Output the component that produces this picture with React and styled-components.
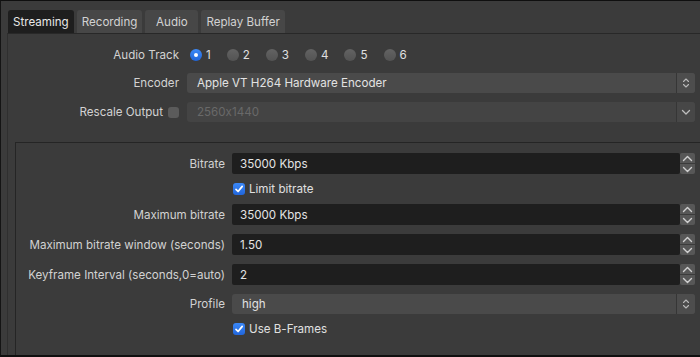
import React from 'react';
import styled, { createGlobalStyle } from 'styled-components';

const GlobalStyle = createGlobalStyle`
  html, body {
    margin: 0;
    padding: 0;
    background: #3b3b3b;
  }
  body {
    font-family: Inter, "Liberation Sans", sans-serif;
    font-feature-settings: "calt" 0;
  }
  * {
    box-sizing: border-box;
  }
`;

const Window = styled.div`
  width: 700px;
  height: 357px;
  overflow: hidden;
  background: #3b3b3b;
  border-top: 1px solid #0f0f0f;
  border-left: 1px solid #141414;
  border-bottom: 2px solid #0f0f0f;
  padding: 9px 0 0 6px;
  display: flex;
  flex-direction: column;
  font-size: 11.6px;
  color: #d4d4d4;
`;

const TabBar = styled.div`
  display: flex;
  gap: 3px;
  height: 23px;
  padding-left: 1px;
`;

const Tab = styled.div`
  height: 23px;
  min-width: 53px;
  padding: 0 5px;
  display: flex;
  align-items: center;
  justify-content: center;
  border-radius: 3px 3px 0 0;
  background: ${(p) => (p.$active ? '#1e1e1e' : '#474747')};
  color: ${(p) => (p.$active ? '#e8e8e8' : '#d2d2d2')};
  white-space: nowrap;
`;

const Pane = styled.div`
  flex: 1;
  display: flex;
  flex-direction: column;
  border-top: 1px solid #282828;
  border-left: 1px solid #2f2f2f;
`;

const TopForm = styled.div`
  display: grid;
  grid-template-columns: 171px 1fr;
  grid-template-rows: 18px 20px 20px;
  column-gap: 8px;
  row-gap: 9px;
  padding: 12px 5px 0 0;
`;

const GroupBox = styled.div`
  flex: 1;
  margin: 20px -10px 0 7px;
  border-top: 1px solid #252525;
  border-left: 1px solid #252525;
  padding: 10px 15px 0 0;
  display: grid;
  grid-template-columns: 209px 1fr;
  align-content: start;
  column-gap: 7px;
  row-gap: 9px;
`;

const Label = styled.div`
  justify-self: end;
  align-self: center;
  white-space: nowrap;
  color: #d2d2d2;
`;

const LabelWithBox = styled.div`
  justify-self: end;
  align-self: center;
  display: flex;
  align-items: center;
  gap: 5px;
  white-space: nowrap;
  color: #d2d2d2;
`;

const RadioGroup = styled.div`
  display: flex;
  align-items: center;
  gap: 16px;
  padding-left: 3px;
`;

const RadioItem = styled.div`
  display: flex;
  align-items: center;
  gap: 4px;
  color: #e0e0e0;
`;

const Radio = styled.span`
  width: 12px;
  height: 12px;
  border-radius: 50%;
  display: flex;
  align-items: center;
  justify-content: center;
  background: ${(p) =>
    p.$checked
      ? 'linear-gradient(#3d8af7, #1f64d8)'
      : 'linear-gradient(#636363, #535353)'};

  &::after {
    content: '';
    width: 4px;
    height: 4px;
    border-radius: 50%;
    background: #fff;
    display: ${(p) => (p.$checked ? 'block' : 'none')};
  }
`;

const SelectBox = styled.div`
  height: 20px;
  display: flex;
  border-radius: 3px;
  overflow: hidden;
  background: ${(p) => (p.$disabled ? '#444444' : '#4a4a4a')};
`;

const SelectText = styled.div`
  flex: 1;
  display: flex;
  align-items: center;
  padding: 0 10px;
  color: ${(p) => (p.$disabled ? '#696969' : '#e2e2e2')};
`;

const SelectButton = styled.div`
  width: 19px;
  display: flex;
  align-items: center;
  justify-content: center;
  border-left: 1px solid #363636;
  background: ${(p) => (p.$disabled ? '#474747' : '#4d4d4d')};
`;

const SpinBox = styled.div`
  height: 21px;
  display: flex;
`;

const SpinInput = styled.div`
  flex: 1;
  display: flex;
  align-items: center;
  padding: 0 8px;
  background: #1e1e1e;
  border-radius: 2px;
  color: #e4e4e4;
`;

const SpinButtons = styled.div`
  width: 15px;
  display: flex;
  flex-direction: column;
  gap: 1px;
`;

const SpinHalf = styled.div`
  flex: 1;
  display: flex;
  align-items: center;
  justify-content: center;
  background: #575757;
  border-radius: ${(p) => (p.$up ? '2px 2px 0 0' : '0 0 2px 2px')};
`;

const CheckRow = styled.div`
  grid-column: 2;
  height: 12px;
  display: flex;
  align-items: center;
  gap: 4px;
  padding-left: 1px;
  color: #e0e0e0;
`;

const CheckBox = styled.span`
  width: ${(p) => (p.$size || 12)}px;
  height: ${(p) => (p.$size || 12)}px;
  border-radius: 3px;
  display: flex;
  align-items: center;
  justify-content: center;
  background: ${(p) =>
    p.$checked ? 'linear-gradient(#3b88f7, #2166dc)' : '#5b5b5b'};
`;

const Check = () => (
  <svg width="10" height="10" viewBox="0 0 10 10">
    <path d="M2 5.3 L4.1 7.5 L8.2 2.4" fill="none" stroke="#fff" strokeWidth="1.7" strokeLinecap="round" strokeLinejoin="round" />
  </svg>
);

const UpDown = () => (
  <svg width="8" height="12" viewBox="0 0 8 12">
    <path d="M1.5 4.5 L4 2 L6.5 4.5 M1.5 7.5 L4 10 L6.5 7.5" fill="none" stroke="#b8b8b8" strokeWidth="1.1" strokeLinecap="round" strokeLinejoin="round" />
  </svg>
);

const Down = () => (
  <svg width="10" height="8" viewBox="0 0 10 8">
    <path d="M1.5 2.5 L5 6 L8.5 2.5" fill="none" stroke="#bdbdbd" strokeWidth="1.3" strokeLinecap="round" strokeLinejoin="round" />
  </svg>
);

const Chevron = ({ up }) => (
  <svg width="11" height="7" viewBox="0 0 11 7">
    <path d={up ? 'M1.5 5.5 L5.5 1.5 L9.5 5.5' : 'M1.5 1.5 L5.5 5.5 L9.5 1.5'} fill="none" stroke="#d0d0d0" strokeWidth="1.4" strokeLinecap="round" strokeLinejoin="round" />
  </svg>
);

const Select = ({ value, disabled, single }) => (
  <SelectBox $disabled={disabled}>
    <SelectText $disabled={disabled}>{value}</SelectText>
    <SelectButton $disabled={disabled}>{single ? <Down /> : <UpDown />}</SelectButton>
  </SelectBox>
);

const Spin = ({ value }) => (
  <SpinBox>
    <SpinInput>{value}</SpinInput>
    <SpinButtons>
      <SpinHalf $up><Chevron up /></SpinHalf>
      <SpinHalf><Chevron /></SpinHalf>
    </SpinButtons>
  </SpinBox>
);

const tabs = ['Streaming', 'Recording', 'Audio', 'Replay Buffer'];
const tracks = [1, 2, 3, 4, 5, 6];

export default function App() {
  return (
    <>
      <GlobalStyle />
      <Window>
        <TabBar>
          {tabs.map((t, i) => (
            <Tab key={t} $active={i === 0}>{t}</Tab>
          ))}
        </TabBar>
        <Pane>
          <TopForm>
            <Label>Audio Track</Label>
            <RadioGroup>
              {tracks.map((n) => (
                <RadioItem key={n}>
                  <Radio $checked={n === 1} />
                  {n}
                </RadioItem>
              ))}
            </RadioGroup>

            <Label>Encoder</Label>
            <Select value="Apple VT H264 Hardware Encoder" />

            <LabelWithBox>
              Rescale Output
              <CheckBox $size={11} />
            </LabelWithBox>
            <Select value="2560x1440" disabled single />
          </TopForm>

          <GroupBox>
            <Label>Bitrate</Label>
            <Spin value="35000 Kbps" />

            <CheckRow>
              <CheckBox $checked><Check /></CheckBox>
              Limit bitrate
            </CheckRow>

            <Label>Maximum bitrate</Label>
            <Spin value="35000 Kbps" />

            <Label>Maximum bitrate window (seconds)</Label>
            <Spin value="1.50" />

            <Label>Keyframe Interval (seconds,0=auto)</Label>
            <Spin value="2" />

            <Label>Profile</Label>
            <Select value="high" />

            <CheckRow>
              <CheckBox $checked><Check /></CheckBox>
              Use B-Frames
            </CheckRow>
          </GroupBox>
        </Pane>
      </Window>
    </>
  );
}
